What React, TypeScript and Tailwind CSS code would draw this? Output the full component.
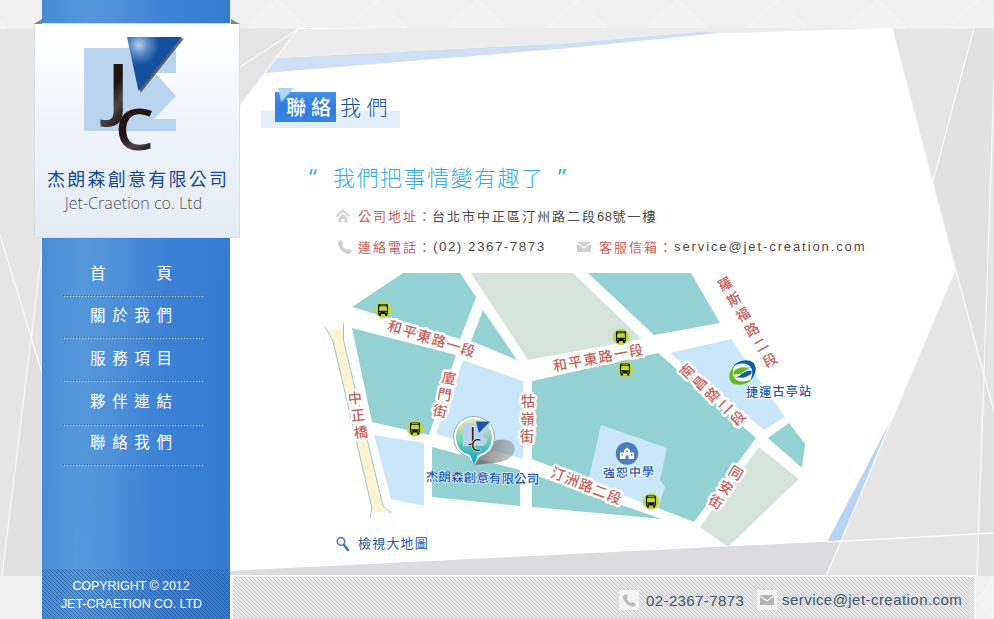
import React from "react";

const CJK = "font-['Liberation_Sans','Noto_Sans_CJK_TC',sans-serif]";
const TC = "font-['Noto_Sans_CJK_TC',sans-serif]";

function Backdrop() {
  const peaks = [-23, 77, 177, 277, 377, 477, 577, 677, 777, 877, 977];
  return (
    <svg className="absolute inset-0" width="994" height="619" viewBox="0 0 994 619">
      <rect width="994" height="619" fill="#f0f0f0" />
      {peaks.map((x) => (
        <path key={x} d={`M${x - 30} 28L${x} 0L${x + 30} 28Z`} fill="#f2f2f2" stroke="#f7f7f7" strokeWidth="1" />
      ))}
      <path d="M994 578L977 600L994 619" fill="#f3f3f3" stroke="#f8f8f8" />
      <rect y="28.500" width="994" height="547.500" fill="#e6e6e6" />
      <path d="M42 250L32 338L42 373Z" fill="#e3e3e3" />
      <path d="M32 338L42 373V576H2Z" fill="#e1e1e1" />
      <path d="M298 28H892L730 33L276 58Z" fill="#ececec" />
      <path d="M974 28H994V90L986 376L933 181Z" fill="#e1e1e1" />
      <path d="M986 376L994 412V576H977Z" fill="#e1e1e1" />
      <path d="M298 28L230 118V571L841 541L891 422L955 270L892 28L730 33Z" fill="#fff" />
      <path d="M276 58L570 43L700 31.500L720 33L570 48L265 73Z" fill="#cfe0f4" />
      <path d="M276 58L298 29L720 30L570 43Z" fill="#ececec" />
      <path d="M298 29L230 119V28Z" fill="#e4e4e4" />
      <path d="M230 571L841 541L826 576H230Z" fill="#dcdcde" />
      <path d="M955 270L841 541L826 576H977L986 376Z" fill="#e6e6e6" />
      <path d="M890 422L827 542L842 540Z" fill="#b9d4f0" />
      <g stroke="#f9f9f9" strokeWidth="1.300" fill="none">
        <path d="M0 235L42 373M42 250L2 576M298 29L240 67M298 29L230 119" />
        <path d="M892 28L955 268L994 412M974 28L933 181M994 80L977 576M955 270L841 541L826 576M827 542L994 533" />
      </g>
    </svg>
  );
}

function Logo() {
  return (
    <svg className="-ml-[6px] block shrink-0 overflow-visible" width="104" height="118" viewBox="82 34 104 118">
      <defs>
        <radialGradient id="tri" gradientUnits="userSpaceOnUse" cx="139" cy="45" r="20">
          <stop offset="0" stopColor="#b7cfe9" />
          <stop offset=".45" stopColor="#5b8bc7" />
          <stop offset="1" stopColor="#164f9f" />
        </radialGradient>
        <linearGradient id="ink" x1="0" y1="0" x2=".4" y2="1">
          <stop offset=".6" stopColor="#201513" />
          <stop offset=".8" stopColor="#4d4443" />
          <stop offset="1" stopColor="#201513" />
        </linearGradient>
      </defs>
      <path d="M84 48H176V73H155L176 96L154 119H176V131H84Z" fill="#bad4ef" />
      <path d="M130 38.500H184L140.500 93Z" fill="#3a3a3a" opacity=".75" />
      <path d="M127 37H182L138.500 91Z" fill="url(#tri)" />
      <text transform="translate(106.500 112.500) scale(1.130 1)" fontFamily="Open Sans" fontWeight="600" fontSize="69" fill="url(#ink)">J</text>
      <text transform="translate(115 150) scale(1.080 1)" fontFamily="Open Sans" fontWeight="600" fontSize="57" fill="url(#ink)">C</text>
    </svg>
  );
}

const NAV = [
  { label: "首　　頁", height: "h-[42px]", lift: "pb-[4px]" },
  { label: "關於我們", height: "h-[42px]", lift: "pb-[4px]" },
  { label: "服務項目", height: "h-[43px]", lift: "pb-[5px]" },
  { label: "夥伴連結", height: "h-[44px]", lift: "pb-[7px]" },
  { label: "聯絡我們", height: "h-[40px]", lift: "pb-[5px]" },
];

function Sidebar() {
  return (
    <aside className="relative ml-[42px] flex h-[619px] w-[188px] shrink-0 flex-col bg-[linear-gradient(91deg,#458ad5_0%,#5497da_22%,#5294da_32%,#3a80d4_68%,#347ad0_100%)]">
      <div className="-ml-[8px] flex h-[24px] w-[206px] items-end justify-between">
        <i className="h-[5px] w-[8px] bg-[#858585] [clip-path:polygon(100%_0,100%_100%,0_100%)]" />
        <i className="h-[5px] w-[9px] bg-[#858585] [clip-path:polygon(0_0,100%_100%,0_100%)]" />
      </div>
      <div className="-mt-px -ml-[8px] flex h-[215px] w-[206px] flex-col items-center border border-[#d8dfe5] bg-[linear-gradient(#ffffff_5%,#f0f4f9_45%,#e5ebf4_100%)] pt-[10px]">
        <Logo />
        <div className={`mt-[12px] flex h-[28px] w-[180px] items-center justify-between text-[18px] font-normal text-[#174a90] ${TC}`}>
          {"杰朗森創意有限公司".split("").map((c) => <span key={c}>{c}</span>)}
        </div>
        <div className="mt-px ml-[-7px] h-[24px] font-['Open_Sans'] text-[16px] leading-[20px] font-light tracking-[0.050px] whitespace-nowrap text-[#555]">
          Jet-Craetion co. Ltd
        </div>
      </div>
      <nav className="mt-[17px] ml-[21px] w-[142px]">
        {NAV.map((n) => (
          <a key={n.label} className={`flex ${n.height} flex-col justify-end`}>
            <span className={`flex h-[40px] shrink-0 items-center justify-between pr-[33px] pl-[27px] text-[15.500px] text-white ${n.lift} ${TC}`}>
              {n.label.split("").map((c, i) => <span key={i}>{c}</span>)}
            </span>
            <span className="block h-px w-full shrink-0 bg-[repeating-linear-gradient(90deg,#356ba5_0_1px,transparent_1px_3px)]" />
            <span className="block h-px w-full shrink-0 bg-[repeating-linear-gradient(90deg,transparent_0_1px,#d5e5f6_1px_2px,transparent_2px_3px)]" />
          </a>
        ))}
      </nav>
      <div className="mt-auto flex h-[50px] flex-col items-center bg-[repeating-linear-gradient(45deg,#123f7a77_0_1px,transparent_1px_2.830px)] pt-[8px] pr-[9px] font-['Liberation_Sans'] text-[12.500px] leading-[18px] whitespace-nowrap text-white">
        <span className="-ml-[1px] tracking-[-0.050px]">COPYRIGHT © 2012</span>
        <span className="tracking-[-0.050px]">JET-CRAETION CO. LTD</span>
      </div>
    </aside>
  );
}

function Phone({ size, color }: { size: number; color: string }) {
  return (
    <svg width={size} height={size} viewBox="0 0 14 14">
      <path d="M.8 1.500Q2.500-.5 4.300 1L5.300 3.500Q5.300 4.600 4 5.400Q5.200 8.300 8.500 9.800Q9.500 8.500 10.600 8.700L13.300 10.200Q14.400 11.300 12.700 13Q10.500 14.700 6.300 12.500Q1.500 9.300 .2 4.900Q-.2 2.700 .8 1.500Z" fill={color} />
    </svg>
  );
}

function Mail({ w, h, color, line }: { w: number; h: number; color: string; line: string }) {
  return (
    <svg width={w} height={h} viewBox="0 0 14 10">
      <rect width="14" height="10" fill={color} />
      <path d="M.3 1L7 6L13.700 1" fill="none" stroke={line} strokeWidth="1.300" />
    </svg>
  );
}

type RoadProps = { text: string; from: [number, number]; to: [number, number]; turn: number; size?: number; fill?: string; halo?: number };

/* Places each character evenly between two centre points, turned by a common angle. */
function Road({ text, from, to, turn, size = 14, fill = "#c4625d", halo = 5 }: RoadProps) {
  const chars = text.split("");
  const last = chars.length - 1;
  return (
    <g>
      {chars.map((c, i) => {
        const x = from[0] + ((to[0] - from[0]) * i) / last;
        const y = from[1] + ((to[1] - from[1]) * i) / last;
        return (
          <text
            key={i}
            transform={`translate(${x} ${y}) rotate(${turn})`}
            y={size * 0.37}
            textAnchor="middle"
            fontFamily="Noto Sans CJK TC, sans-serif"
            fontWeight="500"
            fontSize={size}
            fill={fill}
            stroke="#fff"
            strokeWidth={halo}
            strokeLinejoin="round"
            paintOrder="stroke"
          >
            {c}
          </text>
        );
      })}
    </g>
  );
}

function Bus({ x, y }: { x: number; y: number }) {
  return (
    <g transform={`translate(${x} ${y})`}>
      <circle r="8.200" fill="#bdd642" />
      <path d="M-4-6H4Q5-6 5-4.500V4H-5V-4.500Q-5-6-4-6Z" fill="#111" />
      <path d="M-3.700-3.700H3.700L4.100 .8H-4.100Z" fill="#bdd642" />
      <path d="M-3.500-5H3.500" stroke="#bdd642" strokeWidth=".7" />
      <rect x="-4.200" y="4" width="2.200" height="2" fill="#111" />
      <rect x="2" y="4" width="2.200" height="2" fill="#111" />
      <circle cx="-3.200" cy="2.500" r=".7" fill="#bdd642" />
      <circle cx="3.200" cy="2.500" r=".7" fill="#bdd642" />
    </g>
  );
}

function StreetMap() {
  return (
    <svg className="mt-[8px] ml-[90px] block overflow-visible" width="500" height="267" viewBox="320 265 500 267">
      <defs>
        <linearGradient id="pin" x1="0" y1="0" x2="0" y2="1">
          <stop offset=".1" stopColor="#d3e8b4" />
          <stop offset=".6" stopColor="#55c4bd" />
          <stop offset="1" stopColor="#009fcb" />
        </linearGradient>
        <linearGradient id="shade" x1="0" y1="0" x2="1" y2="0">
          <stop offset="0" stopColor="#555" stopOpacity=".75" />
          <stop offset="1" stopColor="#777" stopOpacity=".4" />
        </linearGradient>
      </defs>
      <g fill="#94d1d3">
        <path d="M352 307L403 273H460L476 297L460 339Z" />
        <path d="M483 310L517 360L471 341Z" />
        <path d="M588 273H691L720 323L654 335Z" />
        <path d="M352 328L456 355L429 435L372 422Z" />
        <path d="M532 381L658 353L756 438L694 522L532 459Z" />
        <path d="M789 423L805 444L802 468L768 438Z" />
        <path d="M432 447L520 470V506L432 497Z" />
        <path d="M532 474L662 519L532 507Z" />
      </g>
      <g fill="#d4e4da">
        <path d="M471 273H573L642 339L528 360Z" />
        <path d="M759 447L799 479L728 547L700 527Z" />
      </g>
      <g fill="#c9e7f8">
        <path d="M463 360L523 381V459L436 434Z" />
        <path d="M670 353L731 339L785 417L764 430Z" />
        <path d="M601 425L667 448L660 480L665 487L658 509L588 481Z" />
        <path d="M374 435L424 443V506L391 499Z" />
      </g>
      <path d="M328 330L343 328V340L383 506L387 511L372 513L333 341Z" fill="#fef3d3" />
      <path d="M325 327L333 341L372 508L370 518M343.500 323V340L383 506L391 513" fill="none" stroke="#8fceca" strokeWidth="1" />

      <Road text="和平東路一段" from={[395, 327]} to={[468, 350]} turn={16} />
      <Road text="廈門街" from={[449, 378]} to={[440, 411]} turn={10} />
      <Road text="中正橋" from={[355, 398]} to={[361, 432]} turn={-6} />
      <Road text="牯嶺街" from={[528, 401]} to={[527, 436]} turn={0} />
      <Road text="和平東路一段" from={[560, 365]} to={[636, 350.500]} turn={-10} />
      <Road text="羅斯福路二段" from={[725, 284]} to={[770, 360]} turn={-30} />
      <Road text="南昌路二段" from={[687, 371]} to={[738, 418]} turn={-46} />
      <Road text="同安街" from={[736, 473]} to={[716, 502]} turn={31} />
      <Road text="汀洲路二段" from={[558, 474]} to={[614, 497]} turn={20} />

      <Bus x={383} y={310} />
      <Bus x={621} y={337} />
      <Bus x={625} y={369.500} />
      <Bus x={415} y={428.500} />
      <Bus x={651} y={501.500} />

      <path d="M473 465Q482 446 497 440Q513 437 515 449Q513 461 494 463Z" fill="url(#shade)" />
      <path d="M474 466L468.500 457Q453.500 452 453.500 437A20.500 20.500 0 0 1 494.500 437Q494.500 452 479.500 457Z" fill="#fff" stroke="#9aa7a7" strokeWidth="1" />
      <path d="M474 465L470 455Q456 451 456 437A18 18 0 0 1 492 437Q492 451 478 455Z" fill="url(#pin)" />
      <path d="M463 423H489V429L483 435L488 440L484 446H463Z" fill="#b7d4ee" />
      <path d="M476 421.500H490L479 433Z" fill="#1e55a8" />
      <text x="470" y="441" fontFamily="Open Sans" fontSize="20" fill="#201513" stroke="#fff" strokeWidth="1" paintOrder="stroke">J</text>
      <text x="471" y="450.500" fontFamily="Open Sans" fontSize="16.500" fill="#201513" stroke="#fff" strokeWidth="1" paintOrder="stroke">C</text>

      <circle cx="627" cy="453.500" r="11.200" fill="#4d7dbc" />
      <path d="M620 459V452.500H624V450L627 447.500L630 450V452.500H634V459H628.500V455.500H625.500V459Z" fill="#fff" />
      <path d="M621.500 454h1.500v1.500h-1.500zM631 454h1.500v1.500h-1.500zM626.300 450.500h1.500v1.500h-1.500z" fill="#4d7dbc" />

      <g transform="translate(742.500 372.500)">
        <ellipse rx="11.500" ry="10.500" fill="#fff" opacity=".7" />
        <path d="M-11-4Q-6-12 3-12.300Q13-12.500 13.300-3.500Q13 3 8 7.500Q11 1 9-4Q6-9.500-1-9Q-7-8.500-11-4Z" fill="#1658a8" />
        <path d="M11 5Q6 12-3 12.300Q-13 12.500-13.300 3.500Q-13-2-8-6.500Q-11-1-9 4Q-6 9.500 1 9Q7 8.500 11 5Z" fill="#63b81e" />
        <path d="M-9-1Q-3-6 2-5L9-5Q4-4 3-1Q-1 2-9 2Z" fill="#63b81e" />
        <path d="M9 1Q3 6-2 5L-8 5Q-3 4-2 1Q2-2 9-2Z" fill="#1658a8" />
        <path d="M-7 4Q-2 3-1 1Q3-2 8-3" fill="none" stroke="#fff" strokeWidth="1" />
      </g>

      <Road text="杰朗森創意有限公司" from={[432, 476.500]} to={[533, 479]} turn={1} size={12.500} fill="#1f58a5" halo={1} />
      <Road text="捷運古亭站" from={[752, 392.500]} to={[805, 391.500]} turn={0} size={12} fill="#1f58a5" halo={2} />
      <Road text="強恕中學" from={[609, 473]} to={[648, 471.500]} turn={-1} size={12} fill="#1f58a5" halo={2} />
    </svg>
  );
}

export default function App() {
  return (
    <div className={`relative flex h-[619px] w-[994px] overflow-hidden ${CJK}`}>
      <Backdrop />
      <Sidebar />
      <main className="relative flex w-[764px] flex-col">
        <h1 className={`mt-[92px] ml-[31px] flex h-[36px] w-[139px] bg-[linear-gradient(transparent_19px,#e2eef9_19px)] ${TC}`}>
          <span className="relative ml-[14px] flex h-[30px] w-[61px] items-center bg-[linear-gradient(#4a90e8,#2f7cdf_50%,#3884e4)] pl-[11px] text-[20px] font-medium tracking-[5px] whitespace-nowrap text-white">
            <i className="absolute -top-[4px] left-[3px] h-[14px] w-[16px] bg-[#acd3fc] [clip-path:polygon(0_0,100%_0,20%_100%)]" />
            <span className="relative">聯絡</span>
          </span>
          <span className="ml-[4px] flex h-[30px] items-center text-[21px] font-light tracking-[5.500px] whitespace-nowrap text-[#174f9f]">我們</span>
        </h1>
        <div className={`mt-[32px] ml-[79px] flex h-[32px] items-center text-[22px] whitespace-nowrap text-[#35ade6] ${TC}`}>
          <span className="w-[24px] font-['Noto_Sans']">“</span>
          <span className="w-[225px] font-light tracking-[1.500px]">我們把事情變有趣了</span>
          <span className="font-['Noto_Sans']">”</span>
        </div>
        <div className="mt-[14px] ml-[106px] flex h-[20px] items-center text-[13px] tracking-[2px] whitespace-nowrap text-[#4b4b4b]">
          <svg width="14" height="14" viewBox="0 0 14 14">
            <path d="M.7 7.500L7 1.500L13.300 7.500" fill="none" stroke="#d2d2d2" strokeWidth="2.200" />
            <path d="M2.500 9L7 4.800L11.500 9V13.500H8.500V10H5.500V13.500H2.500Z" fill="#d2d2d2" />
          </svg>
          <span className="ml-[8px] w-[74px] pt-px text-[#c4625d]">公司地址：</span>
          <span className="pt-px">台北市中正區汀州路二段<span className="tracking-[0.500px]">68</span>號一樓</span>
        </div>
        <div className="mt-[11px] ml-[108px] flex h-[20px] items-center text-[13px] tracking-[2px] whitespace-nowrap text-[#4b4b4b]">
          <Phone size={14} color="#cfcfcf" />
          <span className="ml-[6px] w-[74px] pt-px text-[#c4625d]">連絡電話：</span>
          <span className="w-[145px] pl-px text-[13.500px] tracking-[1.450px]">(02) 2367-7873</span>
          <Mail w={14} h={10} color="#d0d0d0" line="#fff" />
          <span className="ml-[8px] w-[74px] pt-px text-[#c4625d]">客服信箱：</span>
          <span className="pl-px tracking-[1.900px]">service@jet-creation.com</span>
        </div>
        <StreetMap />
        <a className="mt-[2px] ml-[106px] flex h-[20px] shrink-0 items-center text-[13px] tracking-[1.200px] text-[#1d57a3]">
          <svg width="14" height="17" viewBox="0 0 14 17">
            <circle cx="5" cy="5.500" r="3.800" fill="#fff" stroke="#5c88c6" strokeWidth="1.700" />
            <path d="M8 9L12 14" stroke="#3d70b8" strokeWidth="2.600" strokeLinecap="round" />
          </svg>
          <span className="ml-[8px]">檢視大地圖</span>
        </a>
        <footer className="mt-[21px] flex h-[44px] w-[746px] shrink-0 items-center border-t-2 border-r-2 border-l-3 border-[#f7f7f7] bg-[#e6e6e6] bg-[repeating-linear-gradient(45deg,#cacaca_0_1px,transparent_1px_2.830px)] pt-[4px] pl-[386px] text-[#43586e]">
          <span className="flex size-[20px] items-center justify-center bg-[#f3f3f3]">
            <Phone size={13} color="#bcbcbc" />
          </span>
          <span className="ml-[7px] w-[111px] pt-[3px] text-[15px] tracking-[0.400px] whitespace-nowrap">02-2367-7873</span>
          <span className="flex size-[20px] items-center justify-center bg-[#f3f3f3]">
            <Mail w={14} h={10} color="#b3b3b3" line="#f3f3f3" />
          </span>
          <span className="ml-[5px] text-[15px] tracking-[0.450px] whitespace-nowrap">service@jet-creation.com</span>
        </footer>
      </main>
    </div>
  );
}
